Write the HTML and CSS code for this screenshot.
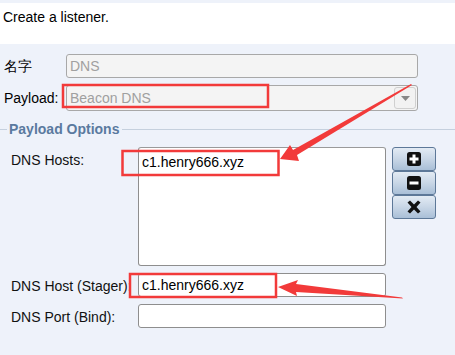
FILE: index.html
```html
<!DOCTYPE html>
<html>
<head>
<meta charset="utf-8">
<link rel="stylesheet" href="styles.css">
</head>
<body>
<div class="page">
  <div class="header">Create a listener.</div>
  <div class="form">
    <div class="row name-row">
      <label class="lbl">名字</label>
      <div class="field disabled">DNS</div>
    </div>
    <div class="row payload-row">
      <label class="lbl">Payload:</label>
      <div class="field disabled combo">
        <span>Beacon DNS</span>
        <span class="drop"><svg width="9" height="5" viewBox="0 0 9 5"><path d="M0 0h9L4.5 5z" fill="#888"/></svg></span>
      </div>
    </div>
  </div>
  <div class="options">
    <div class="legend"><span class="legend-line short"></span><span class="legend-text">Payload Options</span><span class="legend-line"></span></div>
    <div class="opt-grid">
      <label class="olbl">DNS Hosts:</label>
      <div class="hosts-wrap">
        <div class="textarea">c1.henry666.xyz</div>
        <div class="btns">
          <div class="btn"><svg width="14" height="14" viewBox="0 0 14 14"><rect width="14" height="14" rx="2.5" fill="#111"/><path d="M5.5 2.5h3v3h3v3h-3v3h-3v-3h-3v-3h3z" fill="#fff"/></svg></div>
          <div class="btn"><svg width="14" height="14" viewBox="0 0 14 14"><rect width="14" height="14" rx="2.5" fill="#111"/><rect x="2.5" y="5.5" width="9" height="3" fill="#fff"/></svg></div>
          <div class="btn"><svg width="16" height="14" viewBox="0 0 16 14"><path d="M1.5 2.5L4 0.5 8 4.5 12 0.5 14.5 2.5 10.5 7 14.5 11.5 12 13.5 8 9.5 4 13.5 1.5 11.5 5.5 7z" fill="#111"/></svg></div>
        </div>
      </div>
      <label class="olbl">DNS Host (Stager):</label>
      <div class="input">c1.henry666.xyz</div>
      <label class="olbl">DNS Port (Bind):</label>
      <div class="input"></div>
    </div>
  </div>
  <svg class="annot" width="455" height="355" viewBox="0 0 455 355">
    <rect x="63" y="85" width="205" height="22" fill="none" stroke="#f23a3a" stroke-width="2.5"/>
    <rect x="122.5" y="151" width="156" height="24" fill="none" stroke="#f23a3a" stroke-width="2.5"/>
    <rect x="130" y="274" width="146" height="23" fill="none" stroke="#f23a3a" stroke-width="2.5"/>
    <path d="M411 84 L412 85 L297 155 L299 161 L280 159 L290 145 L293 150 Z" fill="#f23a3a"/>
    <path d="M402 297.5 L403 298.5 L296 292 L297 296 L278 287 L298 280 L296 284 Z" fill="#f23a3a"/>
  </svg>
</div>
</body>
</html>
```
FILE: styles.css
```css
* { box-sizing: border-box; }
html, body { margin: 0; padding: 0; }
body {
  background: #eef2fa;
  font-family: "Liberation Sans", Arial, sans-serif;
  font-size: 14px;
  color: #000;
}
.page {
  position: relative;
  width: 455px;
  height: 355px;
  overflow: hidden;
}
.header {
  margin-top: 3px;
  height: 41px;
  background: #fff;
  padding: 6px 0 0 3px;
  line-height: 17px;
}
.form {
  padding: 10px 0 0 4px;
  display: flex;
  flex-direction: column;
  gap: 7px;
}
.row {
  display: grid;
  grid-template-columns: 62px 352px;
  align-items: center;
}
.lbl { line-height: 17px; }
.field {
  height: 24px;
  border: 1px solid #a8a8a8;
  border-radius: 3px;
  background: #f4f4f4;
  color: #a0a0a0;
  padding: 0 0 0 3px;
  display: flex;
  align-items: center;
}
.combo {
  height: 26px;
  justify-content: space-between;
  padding-right: 1px;
}
.drop {
  width: 22px;
  height: 22px;
  border: 1px solid #d0d0d0;
  border-radius: 3px;
  background: #f2f2f2;
  display: flex;
  align-items: center;
  justify-content: center;
}
.options {
  margin-top: 10px;
}
.legend {
  display: flex;
  align-items: center;
  height: 16px;
}
.legend-line {
  flex: 1;
  height: 1px;
  background: #c5d0de;
}
.legend-line.short {
  flex: 0 0 7px;
}
.legend-text {
  color: #5a7a9f;
  font-weight: bold;
  padding: 0 3px 0 2px;
  line-height: 16px;
}
.opt-grid {
  margin-top: 10px;
  padding-left: 11px;
  display: grid;
  grid-template-columns: 127px 304px;
  row-gap: 7px;
}
.olbl {
  line-height: 17px;
  padding-top: 5px;
  color: #111;
}
.hosts-wrap {
  display: flex;
  gap: 6px;
}
.textarea {
  width: 248px;
  height: 119px;
  background: #fff;
  border: 1px solid #8e8e8e;
  border-top-color: #9a9a9a;
  border-radius: 3px;
  padding: 6px 0 0 3px;
  line-height: 17px;
}
.btns {
  display: flex;
  flex-direction: column;
}
.btn {
  width: 44px;
  height: 24px;
  border: 1px solid #5d7898;
  border-radius: 3px;
  background: linear-gradient(#e3ebf4 0%, #c8d6e6 50%, #a9bfd7 100%);
  display: flex;
  align-items: center;
  justify-content: center;
}
.input {
  width: 248px;
  height: 24px;
  background: #fff;
  border: 1px solid #8e8e8e;
  border-radius: 3px;
  padding: 0 0 0 3px;
  display: flex;
  align-items: center;
}
.annot {
  position: absolute;
  left: 0;
  top: 0;
  pointer-events: none;
}
```
